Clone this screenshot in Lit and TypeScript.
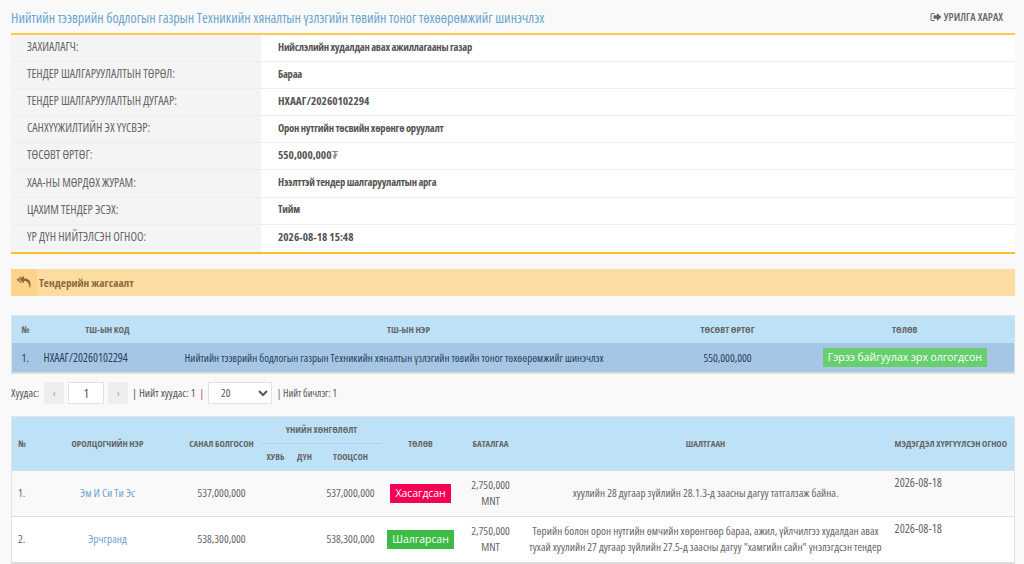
import { LitElement, html, css } from "lit";
import { customElement } from "lit/decorators.js";

const details = [
  ["ЗАХИАЛАГЧ:", "Нийслэлийн худалдан авах ажиллагааны газар"],
  ["ТЕНДЕР ШАЛГАРУУЛАЛТЫН ТӨРӨЛ:", "Бараа"],
  ["ТЕНДЕР ШАЛГАРУУЛАЛТЫН ДУГААР:", "НХААГ/20260102294"],
  ["САНХҮҮЖИЛТИЙН ЭХ ҮҮСВЭР:", "Орон нутгийн төсвийн хөрөнгө оруулалт"],
  ["ТӨСӨВТ ӨРТӨГ:", "550,000,000₮"],
  ["ХАА-НЫ МӨРДӨХ ЖУРАМ:", "Нээлттэй тендер шалгаруулалтын арга"],
  ["ЦАХИМ ТЕНДЕР ЭСЭХ:", "Тийм"],
  ["ҮР ДҮН НИЙТЭЛСЭН ОГНОО:", "2026-08-18 15:48"],
];

const bidders = [
  {
    no: "1.",
    name: "Эм И Си Ти Эс",
    offer: "537,000,000",
    total: "537,000,000",
    status: "Хасагдсан",
    cls: "red",
    reason: "хуулийн 28 дугаар зүйлийн 28.1.3-д заасны дагуу татгалзаж байна.",
  },
  {
    no: "2.",
    name: "Эрчгранд",
    offer: "538,300,000",
    total: "538,300,000",
    status: "Шалгарсан",
    cls: "green",
    reason:
      'Төрийн болон орон нутгийн өмчийн хөрөнгөөр бараа, ажил, үйлчилгээ худалдан авах тухай хуулийн 27 дугаар зүйлийн 27.5-д заасны дагуу "хамгийн сайн" үнэлэгдсэн тендер',
  },
];

@customElement("app-root")
export class AppRoot extends LitElement {
  static styles = css`
    :host {
      display: block;
      height: 564px;
      overflow: hidden;
      background: #f9f9f9;
      color: #555;
      font-family: "Open Sans", Roboto, sans-serif;
      font-stretch: 75%;
      font-size: 12px;
    }
    .page {
      padding: 0 9px 0 11px;
    }
    .top {
      display: flex;
      justify-content: space-between;
      align-items: center;
      height: 33px;
      border-bottom: 2px solid #fdc94f;
    }
    .title {
      color: #6aa5cf;
      font-size: 14px;
      padding-top: 1px;
    }
    .invite {
      display: flex;
      align-items: center;
      gap: 2px;
      margin-right: 12px;
      color: #666;
      font-size: 11px;
      font-weight: 600;
    }
    .details {
      display: grid;
      grid-template-columns: 250px 1fr;
      grid-auto-rows: 27.1px;
      border-bottom: 2px solid #fbbf2d;
    }
    .details .k,
    .details .v {
      display: flex;
      align-items: center;
      padding-bottom: 3px;
      border-bottom: 1px solid #eeeeee;
    }
    .details .k {
      background: #f4f4f4;
      padding-left: 16px;
      color: #666;
      font-size: 12px;
    }
    .details .v {
      background: #fff;
      padding-left: 17px;
      color: #555;
      font-size: 10.6px;
      font-weight: 700;
      letter-spacing: -0.25px;
    }
    .details .v.num {
      font-size: 11.3px;
      letter-spacing: 0;
    }
    .details .last {
      border-bottom: 0;
    }
    .details .cur {
      color: #777;
      font-weight: 400;
    }
    .panel {
      display: flex;
      align-items: center;
      height: 27px;
      margin-top: 15px;
      background: #fddca2;
      color: #8a6d3b;
      font-size: 11.3px;
      font-weight: 700;
    }
    .panel .ico {
      display: flex;
      align-items: center;
      justify-content: center;
      width: 26px;
      height: 27px;
      margin-right: 2px;
      background: #fdd28a;
    }
    table {
      width: 100%;
      border-collapse: collapse;
      table-layout: fixed;
    }
    th {
      background: #bde2f8;
      color: #666;
      font-size: 9px;
      font-weight: 700;
      text-align: center;
      padding: 0;
    }
    td {
      padding: 0;
      text-align: center;
      font-size: 11.3px;
    }
    .jobs {
      margin-top: 19px;
      border: 1px solid #e4e4e4;
      border-bottom: 2px solid #dcdcdc;
      border-right: 1px solid #dcdcdc;
    }
    .jobs th {
      height: 27px;
      font-size: 9.3px;
    }
    .jobs td {
      height: 29px;
      background: #a6c6e5;
      color: #2a3f5a;
    }
    .jobs .left {
      text-align: left;
    }
    .jobs .code {
      padding-left: 5px;
      font-size: 11.7px;
    }
    .jobs .name {
      padding-left: 8px;
      font-size: 11px;
      white-space: nowrap;
    }
    .jobs .status {
      padding-right: 19px;
    }
    .badge {
      display: inline-block;
      padding: 0 5px;
      height: 19px;
      line-height: 19px;
      color: #fff;
      font-family: "Open Sans", sans-serif;
      font-stretch: 100%;
      font-size: 10.4px;
      white-space: nowrap;
      vertical-align: middle;
    }
    .lime {
      background: #67cf6d;
    }
    .red {
      background: #f50057;
    }
    .green {
      background: #3cbc45;
    }
    .pager {
      display: flex;
      align-items: center;
      height: 22px;
      margin-top: 8px;
      color: #555;
      font-size: 11.2px;
      white-space: nowrap;
    }
    .label {
      margin-right: 5px;
    }
    .step {
      display: flex;
      align-items: center;
      justify-content: center;
      width: 20px;
      height: 22px;
      background: #eeeeee;
      color: #999;
      font-size: 11px;
    }
    .page-no {
      display: flex;
      align-items: center;
      justify-content: center;
      width: 34px;
      height: 20px;
      margin: 0 4px;
      background: #fff;
      border: 1px solid #e2e2e2;
      font-size: 13px;
    }
    .total {
      margin: 0 4px;
    }
    .sep {
      color: #c9543f;
    }
    select {
      width: 64px;
      height: 22px;
      margin: 0 5px 0 4px;
      padding-left: 8px;
      background: #fff;
      border: 1px solid #e2e2e2;
      color: #555;
      font-family: "Open Sans", sans-serif;
      font-stretch: 75%;
      font-size: 11px;
      border-radius: 0;
    }
    .records {
      font-size: 10.3px;
    }
    .bids {
      margin-top: 12px;
      border: 1px solid #e4e4e4;
      border-bottom: 2px solid #dcdcdc;
    }
    .bids th {
      height: 26px;
    }
    .bids .group {
      border-bottom: 1px solid #acd3ea;
    }
    .bids td {
      height: 45px;
      line-height: 16px;
      color: #666;
      background: #fff;
      border-top: 1px solid #dddddd;
    }
    .bids tr:first-child td {
      border-top: 0;
    }
    .bids .odd td {
      background: #f9f9f9;
    }
    .bids .no {
      text-align: left;
      padding-left: 6px;
    }
    .bids .nm {
      padding-right: 5px;
    }
    .bids a {
      color: #6aa5cf;
      text-decoration: none;
    }
    .bids .reason {
      padding: 0 4px;
      font-size: 11.2px;
    }
    .bids .date {
      text-align: left;
      padding-left: 5px;
      vertical-align: top;
      padding-top: 4px;
      height: 41px;
      font-size: 12px;
    }
    .bids th.datehead {
      white-space: nowrap;
      text-align: left;
      padding-left: 5px;
    }
  `;

  render() {
    return html`<div class="page">
      <div class="top">
        <span class="title"
          >Нийтийн тээврийн бодлогын газрын Техникийн хяналтын үзлэгийн төвийн
          тоног төхөөрөмжийг шинэчлэх</span
        >
        <span class="invite">
          <svg width="12" height="10" viewBox="0 0 12 10">
            <path
              d="M4.5 1H2a1.5 1.5 0 0 0-1.500 1.500v5A1.500 1.500 0 0 0 2 9h2.500V8H2a.5.5 0 0 1-.5-.5v-5A.5.5 0 0 1 2 2h2.500z"
              fill="#666"
            />
            <path d="M7 1l4.500 4L7 9V6.800H3.500V3.200H7z" fill="#666" />
          </svg>
          УРИЛГА ХАРАХ
        </span>
      </div>
      <div class="details">
        ${details.map(
          ([k, v], i) => html`<div class="k ${i === 7 ? "last" : ""}">${k}</div>
            <div class="v ${i === 7 ? "last" : ""} ${/\d/.test(v) ? "num" : ""}">
              ${v.endsWith("₮")
                ? html`<span>${v.slice(0, -1)}<span class="cur">₮</span></span>`
                : v}
            </div>`
        )}
      </div>
      <div class="panel">
        <span class="ico">
          <svg width="16" height="13" viewBox="0 0 16 13">
            <path d="M5.500 0.200L0.500 3.800l5 3.600V6L2.500 3.800l3-2.200z" fill="#8a6d3b" />
            <path
              d="M8 0L3.500 3.600 8 7.200V5c3 0 5 1.500 5.800 7.500C16 7 14 2.500 8 2.300z"
              fill="#8a6d3b"
            />
          </svg>
        </span>
        Тендерийн жагсаалт
      </div>
      <table class="jobs">
        <colgroup>
          <col style="width:27px" />
          <col style="width:138px" />
          <col style="width:464px" />
          <col style="width:174px" />
          <col />
        </colgroup>
        <tr>
          <th>№</th>
          <th>ТШ-ЫН КОД</th>
          <th>ТШ-ЫН НЭР</th>
          <th>ТӨСӨВТ ӨРТӨГ</th>
          <th class="status">ТӨЛӨВ</th>
        </tr>
        <tr>
          <td>1.</td>
          <td class="left code">НХААГ/20260102294</td>
          <td class="left name">
            Нийтийн тээврийн бодлогын газрын Техникийн хяналтын үзлэгийн төвийн
            тоног төхөөрөмжийг шинэчлэх
          </td>
          <td>550,000,000</td>
          <td class="status">
            <span class="badge lime">Гэрээ байгуулах эрх олгогдсон</span>
          </td>
        </tr>
      </table>
      <div class="pager">
        <span class="label">Хуудас:</span>
        <span class="step">‹</span>
        <span class="page-no">1</span>
        <span class="step">›</span>
        <span class="total">| Нийт хуудас: 1</span>
        <span class="sep">|</span>
        <select>
          <option>20</option>
        </select>
        <span class="records">| Нийт бичлэг: 1</span>
      </div>
      <table class="bids">
        <colgroup>
          <col style="width:27px" />
          <col style="width:143px" />
          <col style="width:80px" />
          <col style="width:28px" />
          <col style="width:30px" />
          <col style="width:62px" />
          <col style="width:78px" />
          <col style="width:62px" />
          <col style="width:368px" />
          <col />
        </colgroup>
        <tr>
          <th rowspan="2" class="no">№</th>
          <th rowspan="2" class="nm">ОРОЛЦОГЧИЙН НЭР</th>
          <th rowspan="2">САНАЛ БОЛГОСОН</th>
          <th colspan="3" class="group">ҮНИЙН ХӨНГӨЛӨЛТ</th>
          <th rowspan="2">ТӨЛӨВ</th>
          <th rowspan="2">БАТАЛГАА</th>
          <th rowspan="2">ШАЛТГААН</th>
          <th rowspan="2" class="datehead">МЭДЭГДЭЛ ХҮРГҮҮЛСЭН ОГНОО</th>
        </tr>
        <tr>
          <th>ХУВЬ</th>
          <th>ДҮН</th>
          <th>ТООЦСОН</th>
        </tr>
        ${bidders.map(
          (b, i) => html`<tr class=${i === 0 ? "odd" : ""}>
            <td class="no">${b.no}</td>
            <td class="nm"><a href="#">${b.name}</a></td>
            <td>${b.offer}</td>
            <td></td>
            <td></td>
            <td>${b.total}</td>
            <td><span class="badge ${b.cls}">${b.status}</span></td>
            <td>2,750,000<br />MNT</td>
            <td class="reason">${b.reason}</td>
            <td class="date">2026-08-18</td>
          </tr>`
        )}
      </table>
    </div>`;
  }
}
